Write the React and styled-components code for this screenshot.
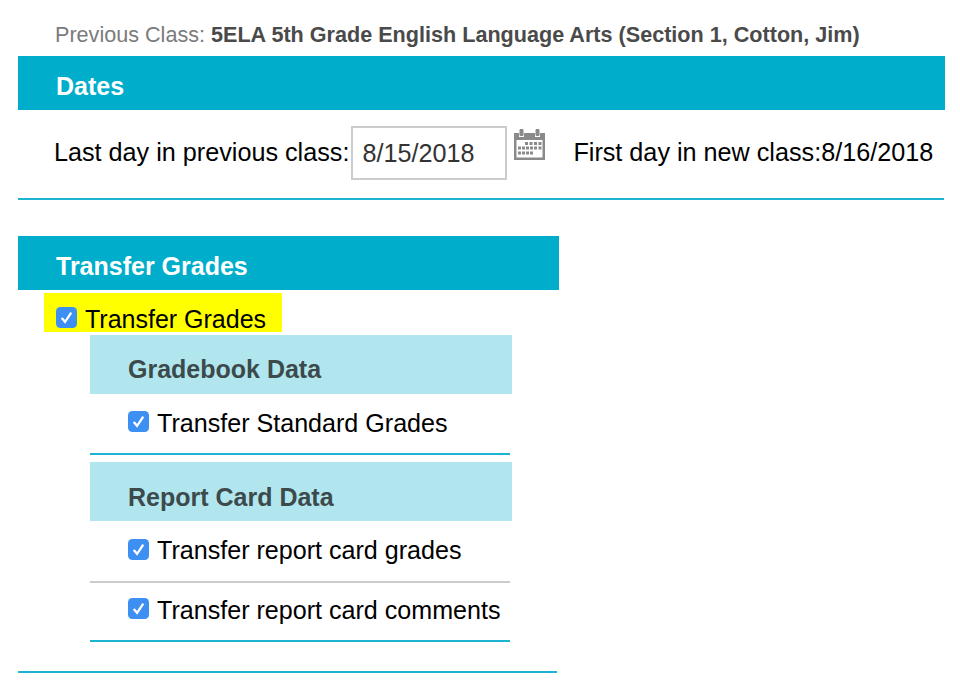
import React from 'react'
import styled, { createGlobalStyle } from 'styled-components'

const GlobalStyle = createGlobalStyle`
  html, body {
    margin: 0;
    padding: 0;
    background: #fff;
    overflow: hidden;
  }
  body {
    font-family: "Liberation Sans", Arial, sans-serif;
    color: #000;
  }
`

const Page = styled.div`
  width: 960px;
  height: 687px;
  padding-top: 20px;
  box-sizing: border-box;
  overflow: hidden;
`

const PreviousClass = styled.p`
  margin: 0 0 0 55px;
  height: 36px;
  line-height: 29px;
  font-size: 21.6px;
  color: #7b7b7b;
  white-space: nowrap;
  b {
    color: #4a4a4a;
  }
`

const SectionBar = styled.h2`
  margin: 0 0 0 ${(p) => (p.$flush ? 0 : 18)}px;
  width: ${(p) => p.$width}px;
  height: 54px;
  box-sizing: border-box;
  padding: 0 0 0 38px;
  background: #00aecb;
  color: #fff;
  font-size: 25px;
  font-weight: bold;
  line-height: 61px;
  white-space: nowrap;
`

const DateRow = styled.div`
  display: flex;
  align-items: flex-start;
  height: 90px;
  margin-left: 18px;
  width: 926px;
  box-sizing: border-box;
  padding: 16px 0 0 36px;
  border-bottom: 2px solid #1cb4d0;
  font-size: 25.2px;
  white-space: nowrap;
`

const DateLabel = styled.span`
  line-height: 52px;
  margin-right: 2px;
`

const DateInput = styled.div`
  width: 156px;
  height: 54px;
  box-sizing: border-box;
  border: 2px solid #cccccc;
  padding-left: 9px;
  line-height: 51px;
  color: #333;
`

const CalendarButton = styled.svg`
  width: 31px;
  height: 32px;
  margin: 2px 28px 0 7px;
  flex: none;
`

const Section = styled.section`
  margin: 36px 0 0 18px;
  width: 539px;
  height: 437px;
  border-bottom: 2px solid #1cb4d0;
  box-sizing: border-box;
`

const Highlight = styled.label`
  display: flex;
  align-items: center;
  width: 238px;
  height: 39px;
  margin: 3px 0 3px 26px;
  padding: 14px 0 0 12px;
  box-sizing: border-box;
  background: #ffff00;
  font-size: 25px;
  white-space: nowrap;
  svg {
    margin-top: -4px;
  }
`

const Group = styled.div`
  margin-left: 72px;
  width: 420px;
`

const GroupTitle = styled.h3`
  margin: ${(p) => (p.$first ? '0' : '7px 0 0')};
  width: 422px;
  height: 59px;
  box-sizing: border-box;
  padding-left: 38px;
  background: #b2e6ef;
  color: #3c4a4c;
  font-size: 25px;
  font-weight: bold;
  line-height: ${(p) => (p.$first ? 69 : 71)}px;
  white-space: nowrap;
`

const OptionRow = styled.label`
  display: flex;
  align-items: center;
  height: ${(p) => p.$height}px;
  padding: 0 0 ${(p) => p.$pad}px 38px;
  box-sizing: border-box;
  border-bottom: 2px solid ${(p) => (p.$grey ? '#cccccc' : '#1cb4d0')};
  font-size: 25.1px;
  white-space: nowrap;
`

const CheckBox = styled.svg`
  width: 21px;
  height: 21px;
  margin: -3px 8px 0 0;
  flex: none;
`

const Check = () => (
  <CheckBox viewBox="0 0 22 22">
    <rect width="22" height="22" rx="4.5" fill="#3d8ff2" />
    <path d="M6 11.5l3.5 4 6.5-9.5" fill="none" stroke="#fff" strokeWidth="2.4" />
  </CheckBox>
)

const Calendar = () => (
  <CalendarButton viewBox="0 0 31 32">
    <path d="M0 5h5v4h5V5h11v4h5V5h5v27H0z" fill="#8a8a8a" />
    <rect x="5.5" y="1" width="4" height="7" rx="1" fill="#8a8a8a" />
    <rect x="21.5" y="1" width="4" height="7" rx="1" fill="#8a8a8a" />
    <rect x="2.5" y="12" width="26" height="17.5" fill="#fff" />
    <path
      d="M11 14h3v3h-3zM15.5 14h3v3h-3zM20 14h3v3h-3zM24.5 14h3v3h-3zM4 18.5h3v3H4zM8 18.5h3v3H8zM12 18.5h3v3h-3zM16 18.5h3v3h-3zM20 18.5h3v3h-3zM24.5 18.5h3v3h-3zM4 23.5h3v3H4zM8 23.5h3v3H8zM12 23.5h3v3h-3zM16 23.5h3v3h-3z"
      fill="#8a8a8a"
    />
  </CalendarButton>
)

export default function App() {
  return (
    <Page>
      <GlobalStyle />
      <PreviousClass>
        Previous Class: <b>5ELA 5th Grade English Language Arts (Section 1, Cotton, Jim)</b>
      </PreviousClass>

      <SectionBar $width={927}>Dates</SectionBar>
      <DateRow>
        <DateLabel>Last day in previous class:</DateLabel>
        <DateInput>8/15/2018</DateInput>
        <Calendar />
        <DateLabel>First day in new class:8/16/2018</DateLabel>
      </DateRow>

      <Section>
        <SectionBar $flush $width={541}>Transfer Grades</SectionBar>
        <Highlight>
          <Check />
          Transfer Grades
        </Highlight>
        <Group>
          <GroupTitle $first>Gradebook Data</GroupTitle>
          <OptionRow $height={61} $pad={1}>
            <Check />
            Transfer Standard Grades
          </OptionRow>
          <GroupTitle>Report Card Data</GroupTitle>
          <OptionRow $grey $height={62} $pad={1}>
            <Check />
            Transfer report card grades
          </OptionRow>
          <OptionRow $height={59} $pad={3}>
            <Check />
            Transfer report card comments
          </OptionRow>
        </Group>
      </Section>
    </Page>
  )
}
